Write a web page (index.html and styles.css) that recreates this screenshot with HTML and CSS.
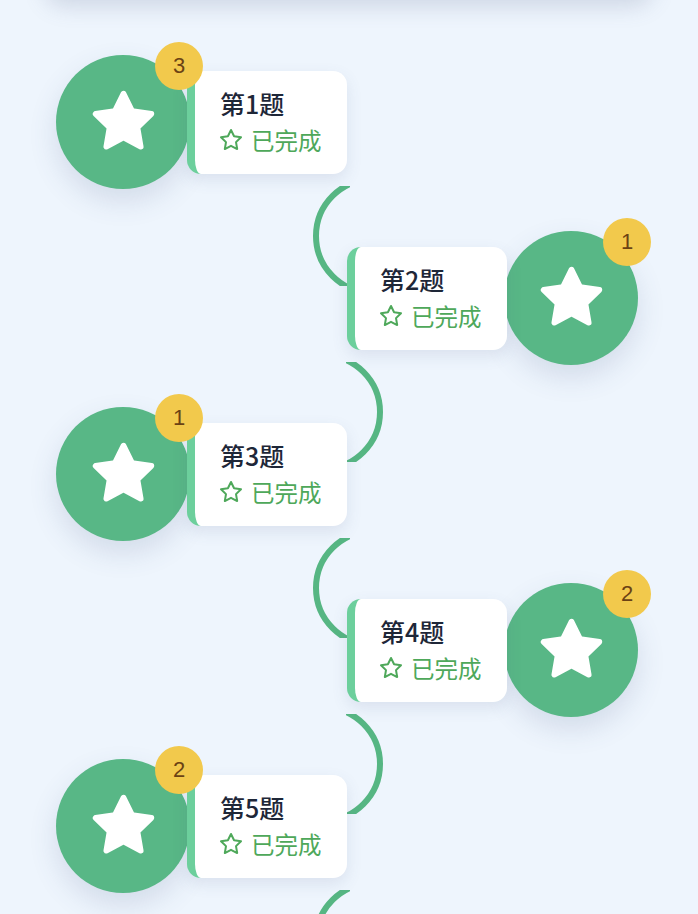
FILE: index.html
```html
<!DOCTYPE html>
<html>

<head>
  <link rel="stylesheet" href="styles.css">
</head>

<body>
  <div class="top-card"></div>

  <div class="path">
    <div class="row row-left">
      <div class="node">
        <svg class="node-star" viewBox="0 0 24 24"><path d="M12 2l3.09 6.26L22 9.27l-5 4.87 1.18 6.88L12 17.770l-6.18 3.25L7 14.14 2 9.27l6.91-1.01L12 2z"/></svg>
        <span class="badge">3</span>
      </div>
      <div class="card">
        <div class="card-title">第1题</div>
        <div class="card-status">
          <svg class="status-star" viewBox="0 0 24 24"><path d="M12 2l3.09 6.26L22 9.27l-5 4.87 1.18 6.88L12 17.77l-6.18 3.25L7 14.14 2 9.27l6.91-1.01L12 2z"/></svg>
          已完成
        </div>
      </div>
      <svg class="link link-left" viewBox="0 0 40 100"><circle cx="62.7" cy="50" r="56.7"/></svg>
    </div>

    <div class="row row-right">
      <div class="card">
        <div class="card-title">第2题</div>
        <div class="card-status">
          <svg class="status-star" viewBox="0 0 24 24"><path d="M12 2l3.09 6.26L22 9.27l-5 4.87 1.18 6.88L12 17.77l-6.18 3.25L7 14.14 2 9.27l6.91-1.01L12 2z"/></svg>
          已完成
        </div>
      </div>
      <div class="node">
        <svg class="node-star" viewBox="0 0 24 24"><path d="M12 2l3.09 6.26L22 9.27l-5 4.87 1.18 6.88L12 17.77l-6.18 3.25L7 14.14 2 9.27l6.91-1.01L12 2z"/></svg>
        <span class="badge">1</span>
      </div>
      <svg class="link link-right" viewBox="0 0 40 100"><circle cx="62.7" cy="50" r="56.7"/></svg>
    </div>

    <div class="row row-left">
      <div class="node">
        <svg class="node-star" viewBox="0 0 24 24"><path d="M12 2l3.09 6.26L22 9.27l-5 4.87 1.18 6.88L12 17.77l-6.18 3.25L7 14.14 2 9.27l6.91-1.01L12 2z"/></svg>
        <span class="badge">1</span>
      </div>
      <div class="card">
        <div class="card-title">第3题</div>
        <div class="card-status">
          <svg class="status-star" viewBox="0 0 24 24"><path d="M12 2l3.09 6.26L22 9.27l-5 4.87 1.18 6.88L12 17.77l-6.18 3.25L7 14.14 2 9.27l6.91-1.01L12 2z"/></svg>
          已完成
        </div>
      </div>
      <svg class="link link-left" viewBox="0 0 40 100"><circle cx="62.7" cy="50" r="56.7"/></svg>
    </div>

    <div class="row row-right">
      <div class="card">
        <div class="card-title">第4题</div>
        <div class="card-status">
          <svg class="status-star" viewBox="0 0 24 24"><path d="M12 2l3.09 6.26L22 9.27l-5 4.87 1.18 6.88L12 17.77l-6.18 3.25L7 14.14 2 9.27l6.91-1.01L12 2z"/></svg>
          已完成
        </div>
      </div>
      <div class="node">
        <svg class="node-star" viewBox="0 0 24 24"><path d="M12 2l3.09 6.26L22 9.27l-5 4.87 1.18 6.88L12 17.77l-6.18 3.25L7 14.14 2 9.27l6.91-1.01L12 2z"/></svg>
        <span class="badge">2</span>
      </div>
      <svg class="link link-right" viewBox="0 0 40 100"><circle cx="62.7" cy="50" r="56.7"/></svg>
    </div>

    <div class="row row-left">
      <div class="node">
        <svg class="node-star" viewBox="0 0 24 24"><path d="M12 2l3.09 6.26L22 9.27l-5 4.87 1.18 6.88L12 17.77l-6.18 3.25L7 14.14 2 9.27l6.91-1.01L12 2z"/></svg>
        <span class="badge">2</span>
      </div>
      <div class="card">
        <div class="card-title">第5题</div>
        <div class="card-status">
          <svg class="status-star" viewBox="0 0 24 24"><path d="M12 2l3.09 6.26L22 9.27l-5 4.87 1.18 6.88L12 17.77l-6.18 3.25L7 14.14 2 9.27l6.91-1.01L12 2z"/></svg>
          已完成
        </div>
      </div>
      <svg class="link link-left" viewBox="0 0 40 100"><circle cx="62.7" cy="50" r="56.7"/></svg>
    </div>
  </div>
</body>

</html>
```

FILE: styles.css
```css
body {
  margin: 0;
  padding: 0;
  width: 698px;
  height: 914px;
  overflow: hidden;
  background-color: #eef5fd;
  font-family: "Noto Sans CJK SC", "Noto Sans", sans-serif;
}

.top-card {
  height: 40px;
  margin: -40px 45px 0;
  background: #ffffff;
  border-radius: 0 0 20px 20px;
  box-shadow: 0 6px 22px rgba(90, 105, 140, 0.22);
}

.path {
  padding-top: 34px;
}

.row {
  position: relative;
  height: 176px;
  display: flex;
  align-items: center;
}

.row-left {
  padding-left: 56px;
}

.row-left .card {
  margin-left: -3px;
}

.row-right {
  padding-left: 347px;
}

.row-right .node {
  margin-left: -3px;
}

.node {
  position: relative;
  width: 134px;
  height: 134px;
  flex-shrink: 0;
  border-radius: 50%;
  background: #58b786;
  box-shadow: 0 12px 28px rgba(70, 90, 130, 0.16);
  display: flex;
  align-items: center;
  justify-content: center;
}

.node-star {
  width: 67px;
  height: 67px;
  margin-top: -1px;
}

.node-star path {
  fill: #ffffff;
  stroke: #ffffff;
  stroke-width: 2;
  stroke-linejoin: round;
}

.badge {
  position: absolute;
  top: -13px;
  left: 99px;
  z-index: 2;
  width: 48px;
  height: 48px;
  border-radius: 50%;
  background: #f2c94c;
  color: #6b4214;
  font-family: "Liberation Sans", sans-serif;
  font-size: 22px;
  display: flex;
  align-items: center;
  justify-content: center;
}

.card {
  position: relative;
  z-index: 1;
  box-sizing: border-box;
  width: 160px;
  height: 103px;
  padding: 15px 0 0 25px;
  background: #ffffff;
  border-left: 8px solid #6ccf9c;
  border-radius: 14px;
  box-shadow: 0 6px 16px rgba(70, 90, 130, 0.12);
}

.card-title {
  font-size: 25px;
  font-weight: 500;
  line-height: 34px;
  color: #1e2738;
}

.card-status {
  display: flex;
  align-items: center;
  gap: 8px;
  margin-top: 5px;
  font-size: 23.5px;
  line-height: 30px;
  color: #4ea85a;
}

.status-star {
  width: 24px;
  height: 24px;
  margin-left: -1px;
}

.status-star path {
  fill: none;
  stroke: #4ea85a;
  stroke-width: 2;
  stroke-linejoin: round;
}

.link {
  position: absolute;
  top: 152px;
  width: 40px;
  height: 100px;
}

.link circle {
  fill: none;
  stroke: #56b683;
  stroke-width: 6;
}

.link-left {
  left: 310px;
}

.link-right {
  left: 346px;
  transform: scaleX(-1);
}
```
